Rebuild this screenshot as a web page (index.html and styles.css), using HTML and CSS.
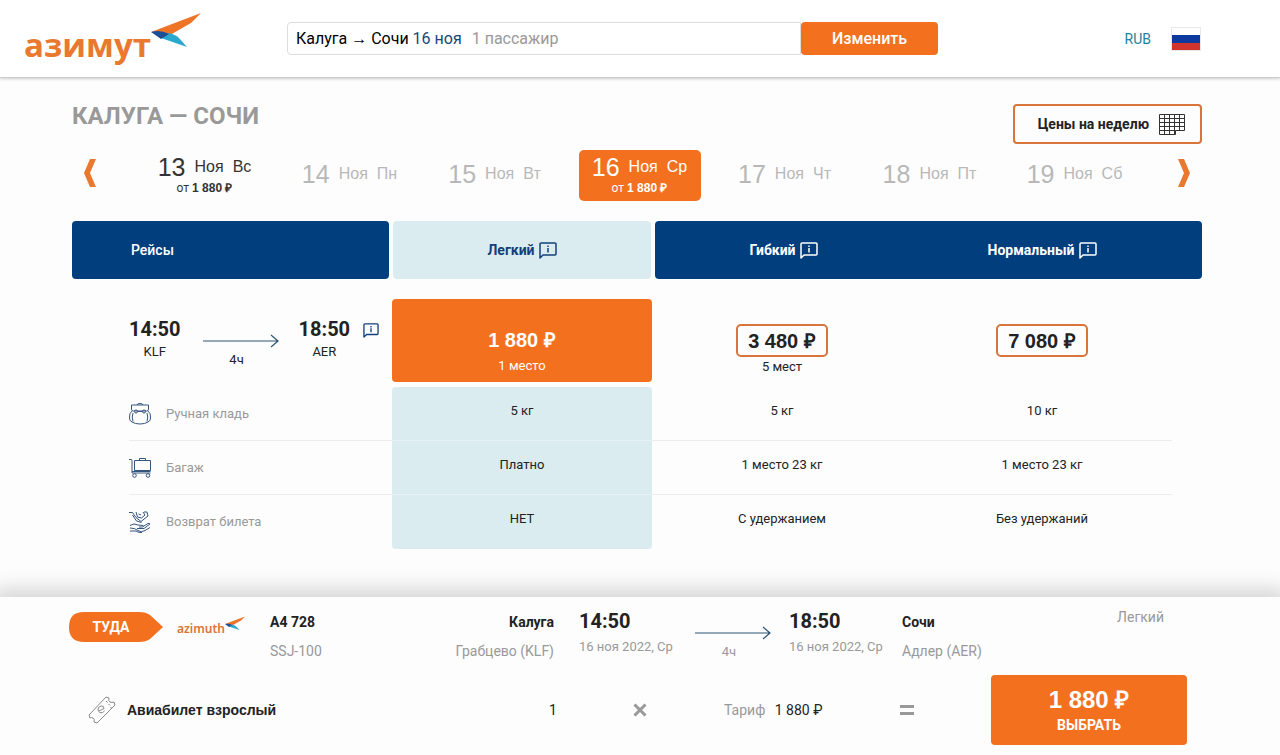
FILE: index.html
```html
<!DOCTYPE html>
<html lang="ru">
<head>
<meta charset="utf-8">
<meta name="viewport" content="width=device-width, initial-scale=1">
<title>Калуга — Сочи</title>
<link rel="stylesheet" href="styles.css">
</head>
<body>
<svg class="defs" aria-hidden="true">
  <symbol id="bird" viewBox="0 0 50 35">
    <path d="M0 19 50 0 40 10 19 22Q10 18 0 19Z" fill="#ee7428"/>
    <path d="M10 25 18 20Q25 22 28 25L36 34Z" fill="#2aa9cf"/>
    <path d="M0 19Q9 16 18 21L10 26Z" fill="#1c4f97"/>
  </symbol>
  <symbol id="info" viewBox="0 0 18 17">
    <path d="M1 16V2q0-1 1-1h14q1 0 1 1v10q0 1-1 1H4z" fill="none" stroke="currentColor" stroke-width="1.500" stroke-linejoin="round"/>
    <path d="M9 3.500v1.500M9 6v4.500" fill="none" stroke="currentColor" stroke-width="1.500"/>
  </symbol>
  <symbol id="arrow" viewBox="0 0 76 14">
    <path d="M0 7h75M68 1l7 6-7 6" fill="none" stroke="currentColor" stroke-width="1.200"/>
  </symbol>
</svg>

<header class="topbar">
  <a class="brand" href="#" aria-label="Азимут">
    <span class="brand-name">азимут</span>
    <svg class="brand-bird" aria-hidden="true"><use href="#bird"/></svg>
  </a>
  <form class="search">
    <button class="search-route" type="button">Калуга → Сочи <span class="search-date">16 ноя</span><span class="search-pax">1 пассажир</span></button>
    <button class="search-edit" type="button">Изменить</button>
  </form>
  <nav class="locale">
    <a class="currency" href="#">RUB</a>
    <button class="flag" type="button" aria-label="Русский"></button>
  </nav>
</header>

<main class="page">
  <div class="heading">
    <h1 class="title">КАЛУГА — СОЧИ</h1>
    <button class="week" type="button">Цены на неделю
      <svg class="week-icon" viewBox="0 0 26 21" aria-hidden="true"><path d="M.5.500h25v16h-9v4H.500zM.500 4.500h25M.500 8.500h25M.500 12.500h25M.500 16.500h16M5.500.500v20M10.500.500v20M15.500.500v20M20.500.500v16" fill="none" stroke="#333"/></svg>
    </button>
  </div>

  <nav class="days" aria-label="Даты">
    <button class="step step-prev" type="button" aria-label="Раньше"><svg viewBox="0 0 14 28"><path d="M6 0h6L6 14l6 14H6L0 14z"/></svg></button>
    <button class="day day-open" type="button"><span class="day-date"><b>13</b><span>Ноя</span><span>Вс</span></span><span class="day-price">от <strong>1 880 ₽</strong></span></button>
    <button class="day" type="button"><span class="day-date"><b>14</b><span>Ноя</span><span>Пн</span></span></button>
    <button class="day" type="button"><span class="day-date"><b>15</b><span>Ноя</span><span>Вт</span></span></button>
    <button class="day day-selected" type="button"><span class="day-date"><b>16</b><span>Ноя</span><span>Ср</span></span><span class="day-price">от <strong>1 880 ₽</strong></span></button>
    <button class="day" type="button"><span class="day-date"><b>17</b><span>Ноя</span><span>Чт</span></span></button>
    <button class="day" type="button"><span class="day-date"><b>18</b><span>Ноя</span><span>Пт</span></span></button>
    <button class="day" type="button"><span class="day-date"><b>19</b><span>Ноя</span><span>Сб</span></span></button>
    <button class="step step-next" type="button" aria-label="Позже"><svg viewBox="0 0 14 28"><path d="M2 0h6l6 14-6 14H2l6-14z"/></svg></button>
  </nav>

  <table class="fares">
    <thead>
      <tr class="fares-head">
        <th class="head-flights" scope="col">Рейсы</th>
        <th class="head-light" scope="col">Легкий <svg class="info" aria-hidden="true"><use href="#info"/></svg></th>
        <th class="head-flex" scope="col">Гибкий <svg class="info" aria-hidden="true"><use href="#info"/></svg></th>
        <th class="head-normal" scope="col">Нормальный <svg class="info" aria-hidden="true"><use href="#info"/></svg></th>
      </tr>
    </thead>
    <tbody>
      <tr class="flight">
        <th class="flight-info" scope="row">
          <span class="point"><b class="time">14:50</b><span>KLF</span></span>
          <span class="leg"><svg class="arrow" aria-hidden="true"><use href="#arrow"/></svg><span>4ч</span></span>
          <span class="point"><b class="time">18:50</b><span>AER</span></span>
          <svg class="info info-small" aria-hidden="true"><use href="#info"/></svg>
        </th>
        <td class="offer"><button class="offer-selected" type="button"><span class="price">1 880 ₽</span><span>1 место</span></button></td>
        <td class="offer"><button class="price price-box" type="button">3 480 ₽</button><span>5 мест</span></td>
        <td class="offer"><button class="price price-box" type="button">7 080 ₽</button></td>
      </tr>
      <tr class="rule">
        <th class="rule-name" scope="row">
          <svg class="rule-icon" viewBox="0 0 22 22" aria-hidden="true"><path d="M8 2Q8 .500 11 .500T14 2M2.500 2h17V6q0 2-2 2h-13q-2 0-2-2zM8.500 8.500h5M3 8Q0 10 .500 15q0 3 2.500 4M19 8q3 2 2.500 7 0 3-2.500 4M4 10Q2.500 14 4 18.500M18 10q1.500 4 0 8.500M3 19q3 2 8 2t8-2"/><circle cx="7" cy="8.500" r="1.500"/><circle cx="15" cy="8.500" r="1.500"/></svg>
          Ручная кладь</th>
        <td class="picked picked-first">5 кг</td><td>5 кг</td><td>10 кг</td>
      </tr>
      <tr class="rule">
        <th class="rule-name" scope="row">
          <svg class="rule-icon" viewBox="0 0 22 22" aria-hidden="true"><path d="M0 2.500h2q1 0 1 1V16h18.500M5.500 3.500h16v10h-16zM3 14.500h18.500M10.500 3.500v-2h6v2"/><circle cx="5.500" cy="18.500" r="1.800"/><circle cx="19" cy="18.500" r="1.800"/></svg>
          Багаж</th>
        <td class="picked">Платно</td><td>1 место 23 кг</td><td>1 место 23 кг</td>
      </tr>
      <tr class="rule">
        <th class="rule-name" scope="row">
          <svg class="rule-icon" viewBox="0 0 22 22" aria-hidden="true"><path d="M0 1.500h3.500l3.500 5 5 4 7-5.500-1-4-3 0M3.500 4l4 6 5 1.500M7 1l1.500 5 4 1 3.500-3-2-3M9.500 3l2.500 1M1 14.500q4-3 8-.500l5 .500q1 2-4 1.500M14 15.500l5-3q2-.500 2 .500l-6 4.500H8M1 17q5 0 8 2.500 3 2.500 7 0l5-3M1 20l6 0q3 2 6 1.500"/></svg>
          Возврат билета</th>
        <td class="picked picked-last">НЕТ</td><td>С удержанием</td><td>Без удержаний</td>
      </tr>
    </tbody>
  </table>
</main>

<section class="summary" aria-label="Выбранный рейс">
  <div class="trip">
    <span class="direction"><svg class="direction-shape" viewBox="0 0 94 30" preserveAspectRatio="none" aria-hidden="true"><path d="M15 0H70Q77 0 81 3L94 15 81 27Q77 30 70 30H15Q0 30 0 15T15 0Z" fill="#f3701f"/></svg><span class="direction-label">ТУДА</span></span>
    <span class="carrier"><span>azimuth</span><svg class="carrier-bird" aria-hidden="true"><use href="#bird"/></svg></span>
    <span class="place"><b>A4 728</b><span>SSJ-100</span></span>
    <span class="place place-from"><b>Калуга</b><span>Грабцево (KLF)</span></span>
    <span class="when"><b class="time">14:50</b><span>16 ноя 2022, Ср</span></span>
    <span class="leg leg-grey"><svg class="arrow" aria-hidden="true"><use href="#arrow"/></svg><span>4ч</span></span>
    <span class="when"><b class="time">18:50</b><span>16 ноя 2022, Ср</span></span>
    <span class="place"><b>Сочи</b><span>Адлер (AER)</span></span>
    <span class="fare-name">Легкий</span>
  </div>
  <div class="total">
    <span class="ticket"><svg class="ticket-icon" viewBox="0 0 28 28" fill="none" stroke="#888" aria-hidden="true"><path d="M1 19 18 1l3 1q-1 3 1 4t4 0l1 3L9 27l-3-1q1-3-1-4t-3 0z"/><path d="M11 15l5-2.500q0-3-3-2.500-3.500 1-3 4 1 3.500 4.500 2.500l2-1.500M18 5l1.500 1.500M20.500 8 22 9.500M22.500 11l1 1"/></svg>Авиабилет взрослый</span>
    <span class="count">1</span>
    <svg class="sign" viewBox="0 0 16 16" aria-label="умножить"><path d="M2.500 2.500l11 11M13.500 2.500l-11 11"/></svg>
    <span class="tariff"><span class="muted">Тариф</span> 1 880 ₽</span>
    <svg class="sign" viewBox="0 0 16 16" aria-label="равно"><path d="M1 4.500h14M1 11.500h14"/></svg>
    <button class="buy" type="button"><span class="buy-price">1 880 ₽</span>ВЫБРАТЬ</button>
  </div>
</section>
</body>
</html>
```
FILE: styles.css
```css
* { box-sizing: border-box; }

body {
  margin: 0;
  min-height: 100vh;
  display: flex;
  flex-direction: column;
  background: #fdfdfd;
  color: #222;
  font: 14px/18px Roboto, "Liberation Sans", sans-serif;
}

button {
  margin: 0;
  padding: 0;
  border: 0;
  background: none;
  color: inherit;
  font: inherit;
  cursor: pointer;
}

a { color: inherit; text-decoration: none; }
.defs { position: absolute; width: 0; height: 0; }

/* top bar */
.topbar {
  display: flex;
  align-items: center;
  height: 78px;
  padding: 0 79px 0 24px;
  background: #fff;
  border-bottom: 1px solid #ccc;
  box-shadow: 0 1px 3px rgba(0, 0, 0, .2);
}

.brand {
  display: flex;
  flex: 0 0 263px;
  align-items: flex-start;
  color: #e8792f;
}
.brand-name {
  padding-top: 12px;
  font: 700 33px/40px "Open Sans", "Noto Sans", sans-serif;
}
.brand-bird { width: 50px; height: 35px; }

.search { display: flex; flex: 0 1 651px; height: 33px; }
.search-route {
  flex: 1;
  padding: 0 8px;
  border: 1px solid #ddd;
  border-radius: 4px 0 0 4px;
  color: #000;
  font-size: 16px;
  text-align: left;
  white-space: nowrap;
}
.search-date { color: #1c4676; }
.search-pax { padding-left: 10px; color: #999; }
.search-edit {
  flex: 0 0 137px;
  border-radius: 4px;
  background: #f3701f;
  color: #fff;
  font-size: 16px;
  font-weight: 500;
}

.locale { display: flex; align-items: center; gap: 20px; margin-left: auto; }
.currency { color: #1f8296; }
.flag {
  width: 30px;
  height: 24px;
  border: 1px solid #e8e8e8;
  background: linear-gradient(#fff 33%, #0b3a9c 33% 66%, #d0342c 66%);
}

/* page */
.page { flex: 1; padding: 26px 78px 48px 72px; }

.heading { display: flex; justify-content: space-between; }
.title { margin: 0; font-size: 24px; line-height: 24px; color: #999; }
.week {
  display: flex;
  align-items: center;
  gap: 10px;
  height: 40px;
  padding: 0 15px 0 23px;
  border: 2px solid #d9743a;
  border-radius: 4px;
  font-weight: 700;
}
.week-icon { width: 26px; height: 21px; }

.days {
  display: grid;
  grid-template-columns: 60px repeat(7, 1fr) 55px;
  align-items: center;
  justify-items: center;
  margin: 6px 0 20px;
}
.step { display: flex; padding-bottom: 6px; fill: #e8792f; }
.step svg { width: 14px; height: 28px; }
.step-prev { justify-self: start; padding-left: 12px; }
.step-next { justify-self: end; padding-right: 12px; }
.day {
  display: flex;
  flex-direction: column;
  align-items: center;
  justify-content: center;
  width: 122px;
  height: 51px;
  padding-bottom: 4px;
  border-radius: 5px;
  color: #b8b8b8;
}
.day-date {
  display: flex;
  align-items: center;
  gap: 9px;
  font: 16px/28px "Liberation Sans", sans-serif;
}
.day-date b { font-size: 25px; font-weight: 400; }
.day-price { font-size: 12px; line-height: 14px; }
.day-price strong, .price, .buy-price { font-family: "Liberation Sans", sans-serif; font-weight: 700; }
.day-open { color: #333; }
.day-selected { background: #f3701f; color: #fff; }

/* fares */
.fares, .fares thead, .fares tbody { display: block; }
.fares th, .fares td { padding: 0; font-weight: 400; text-align: center; }
.fares-head {
  display: grid;
  grid-template-columns: 320px repeat(3, 1fr);
  height: 58px;
  margin-bottom: 20px;
  padding-right: 30px;
  color: #fff;
}
.fares-head th {
  display: flex;
  align-items: center;
  justify-content: center;
  gap: 4px;
  border-radius: 4px;
  background: #003e7e;
}
.fares .fares-head th { font-weight: 700; }
.fares .fares-head .head-flights { justify-content: flex-start; margin-right: 3px; padding-left: 59px; font-weight: 500; }
.fares-head .head-light { margin: 0 1px; background: #daecef; color: #12407a; }
.fares-head .head-flex { margin-left: 3px; border-radius: 4px 0 0 4px; }
.fares .fares-head .head-normal { margin-right: -30px; padding-right: 30px; border-radius: 0 4px 4px 0; }
.info { width: 18px; height: 17px; }
.info-small { width: 16px; height: 15px; }

.flight, .rule {
  display: grid;
  grid-template-columns: 263px repeat(3, 1fr);
  margin: 0 30px 0 57px;
}
.flight { height: 83px; margin-bottom: 5px; }
.fares .flight-info { display: flex; align-items: flex-start; padding-top: 20px; }
.flight-info .info { margin: 4px 0 0 13px; color: #12407a; }
.point { display: flex; flex-direction: column; gap: 4px; font-size: 13px; }
.time { font-size: 20px; line-height: 20px; }
.leg {
  display: flex;
  flex-direction: column;
  align-items: center;
  gap: 3px;
  width: 76px;
  margin: 15px 20px 0 22px;
}
.leg span { padding-right: 8px; font-size: 13px; }
.arrow { width: 76px; height: 14px; color: #2d5474; }

.offer { display: flex; flex-direction: column; align-items: center; gap: 1px; font-size: 13px; }
.fares .offer { padding-top: 25px; }
.fares .offer:nth-child(2) { padding-top: 0; }
.offer-selected {
  display: flex;
  flex-direction: column;
  align-items: center;
  gap: 6px;
  width: 100%;
  height: 83px;
  padding-top: 30px;
  border-radius: 4px;
  background: #f3701f;
  color: #fff;
}
.price { font-size: 20px; line-height: 22px; }
.price-box {
  height: 33px;
  padding: 0 10px;
  border: 2px solid #d9743a;
  border-radius: 5px;
}

.rule { height: 54px; border-bottom: 1px solid #ececec; font-size: 13px; }
.rule:last-child { border-bottom: 0; }
.fares .rule td { padding-top: 15px; }
.fares .picked { margin-bottom: -1px; border-bottom: 1px solid #e6f2f4; background: #daecef; }
.picked-first { border-radius: 4px 4px 0 0; }
.fares .picked-last { margin-bottom: 0; border-bottom: 0; border-radius: 0 0 4px 4px; }
.rule-name { display: flex; align-items: center; gap: 15px; color: #999; }
.rule-icon { width: 22px; height: 22px; fill: none; stroke: #35557f; stroke-linejoin: round; }

/* selected flight summary */
.summary {
  padding: 14px 93px 10px 69px;
  background: #fdfdfd;
  box-shadow: 0 0 20px 8px rgba(0, 0, 0, .16);
}
.trip {
  display: grid;
  grid-template-columns: 108px 93px 100px 1fr 116px 94px 113px 100px 185px;
  align-items: start;
}
.direction { position: relative; width: 94px; height: 30px; margin-top: 1px; }
.direction-shape { position: absolute; inset: 0; width: 100%; height: 100%; }
.direction-label { position: relative; display: block; width: 84px; line-height: 30px; text-align: center; color: #fff; font-weight: 700; }
.carrier { display: flex; align-items: flex-start; padding-top: 5px; color: #d9743a; font: 600 12px/26px "Noto Sans", sans-serif; }
.carrier-bird { width: 20px; height: 15px; }
.place { display: flex; flex-direction: column; gap: 11px; padding-top: 2px; color: #999; }
.place b { color: #222; }
.place-from { align-items: flex-end; padding-right: 25px; }
.when { display: flex; flex-direction: column; gap: 7px; font-size: 13px; color: #999; }
.when .time { color: #222; }
.leg-grey { margin: 15px 0 0; color: #999; }
.fare-name { justify-self: end; margin-right: 23px; line-height: 12px; color: #999; }

.total {
  display: grid;
  grid-template-columns: 1fr 7px 76px 16px 76px 99px 76px 16px 76px 196px;
  align-items: center;
  margin-top: 14px;
}
.ticket { display: flex; align-items: center; gap: 11px; padding-left: 19px; font: 700 14px/18px "Liberation Sans", sans-serif; }
.ticket-icon { width: 28px; height: 28px; }
.sign { width: 16px; height: 16px; grid-column: 4; stroke: #999; stroke-width: 3; }
.tariff { grid-column: 6; white-space: nowrap; }
.tariff + .sign { grid-column: 8; }
.muted { margin-right: 6px; color: #999; }
.buy {
  grid-column: 10;
  display: flex;
  flex-direction: column;
  align-items: center;
  justify-content: center;
  gap: 3px;
  height: 70px;
  border-radius: 4px;
  background: #f3701f;
  color: #fff;
  font-weight: 700;
}
.buy-price { font-size: 24px; line-height: 26px; }
```
